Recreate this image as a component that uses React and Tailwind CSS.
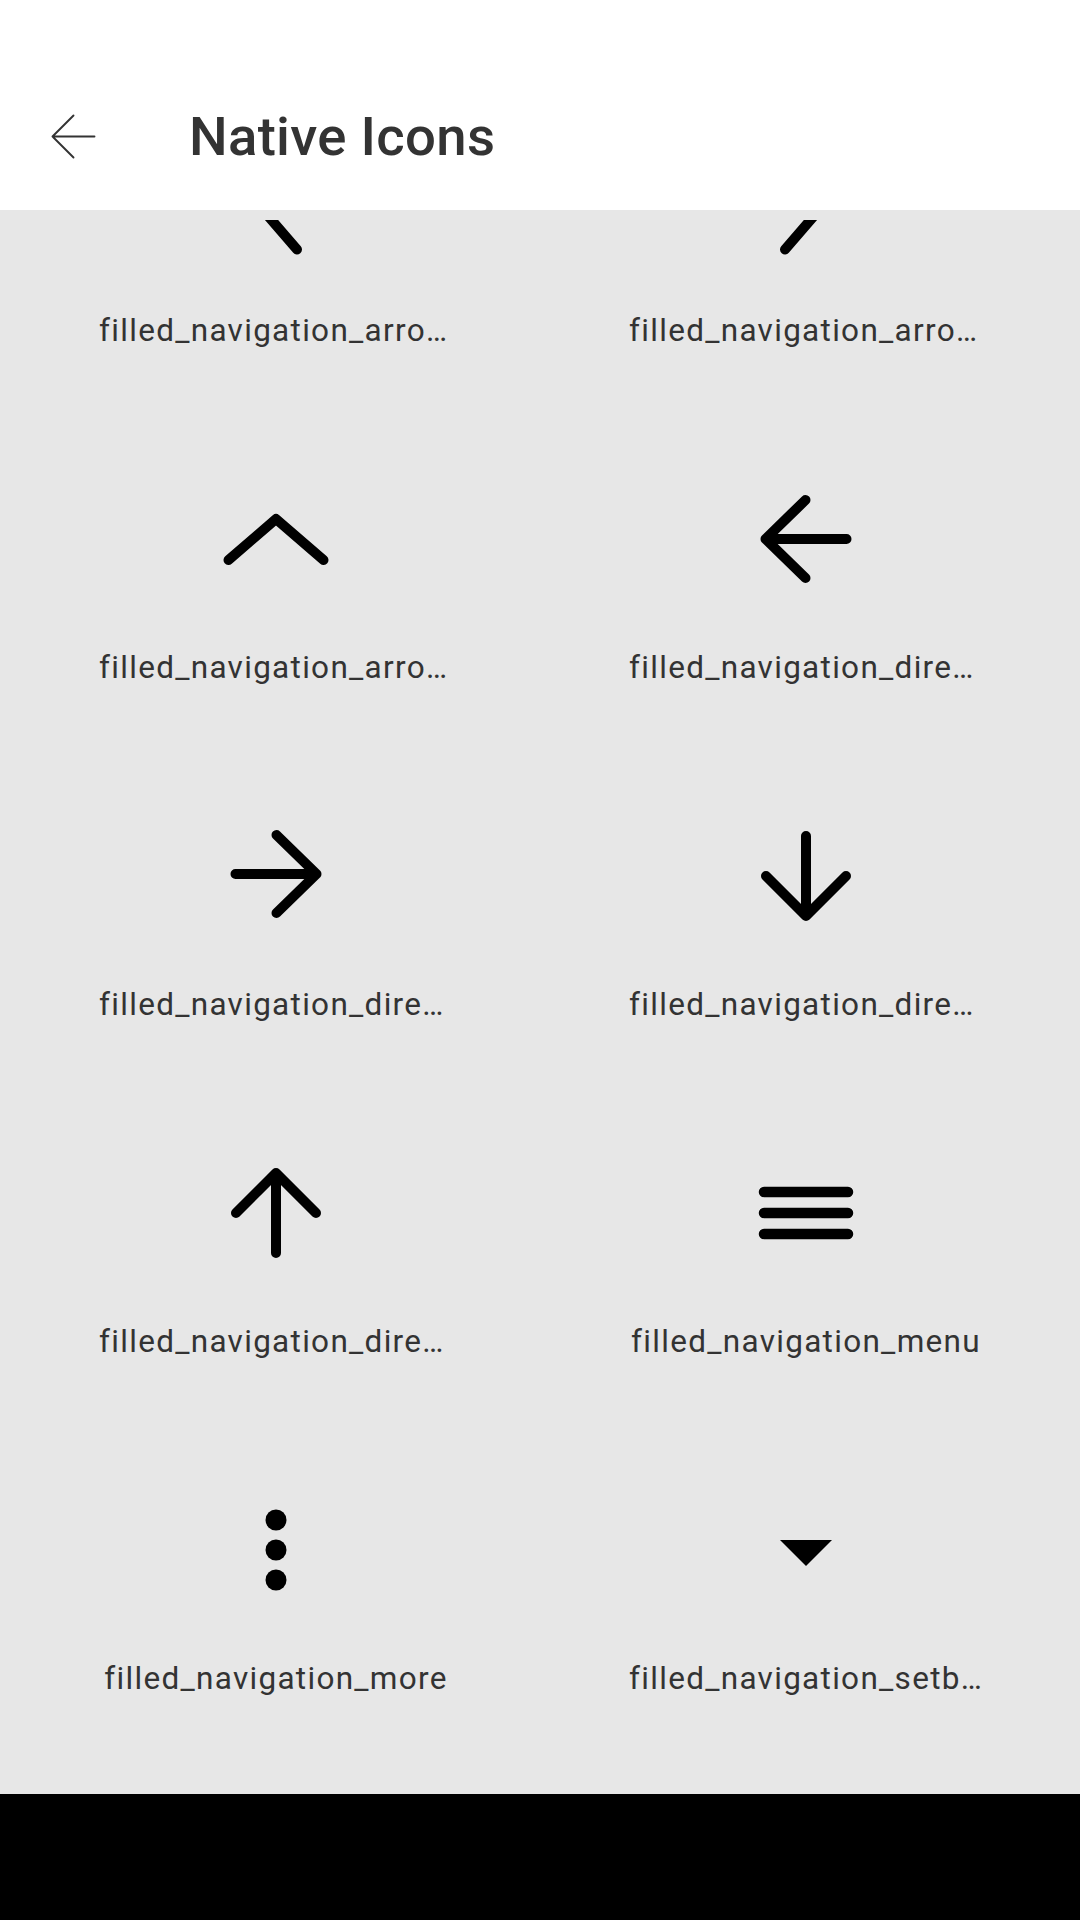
import { useState } from "react";

const FONT = "font-['Roboto','Noto_Sans',sans-serif]";

// icon drawings, all in px around a 120x120 box centred at 60,60
function Icon({ name }) {
  const common = {
    fill: "none",
    stroke: "#000",
    strokeWidth: 10,
    strokeLinecap: "round",
    strokeLinejoin: "round",
  };
  let body = null;
  switch (name) {
    case "arrow_left":
      body = <path d="M81 12.5 L40 60 L81 107.5" {...common} />;
      break;
    case "arrow_right":
      body = <path d="M39 12.5 L80 60 L39 107.5" {...common} />;
      break;
    case "arrow_up":
      body = <path d="M12.5 81 L60 40 L107.5 81" {...common} />;
      break;
    case "dir_left":
      body = <path d="M100.5 60 H19.5 M59.5 21 L19.5 60 L59.5 99" {...common} />;
      break;
    case "dir_right":
      body = <path d="M19.5 58 H100.5 M60.5 19 L100.5 58 L60.5 97" {...common} />;
      break;
    case "dir_down":
      body = <path d="M60 20 V100 M20 60 L60 100 L100 60" {...common} />;
      break;
    case "dir_up":
      body = <path d="M60 100 V20 M20 60 L60 20 L100 60" {...common} />;
      break;
    case "menu":
      body = <path d="M18 39 H102 M18 60 H102 M18 81 H102" {...common} strokeWidth={10.5} />;
      break;
    case "more":
      body = (
        <g fill="#000">
          <circle cx="60" cy="30" r="10.5" />
          <circle cx="60" cy="60" r="10.5" />
          <circle cx="60" cy="90" r="10.5" />
        </g>
      );
      break;
    case "setb":
      body = <path d="M34 50 H86 L60 76 Z" fill="#000" />;
      break;
    default:
      body = null;
  }
  return (
    <svg width="120" height="120" viewBox="0 0 120 120">
      {body}
    </svg>
  );
}

const items = [
  { icon: "arrow_left", label: "filled_navigation_arrow_left" },
  { icon: "arrow_right", label: "filled_navigation_arrow_right" },
  { icon: "arrow_up", label: "filled_navigation_arrow_up" },
  { icon: "dir_left", label: "filled_navigation_direction_left" },
  { icon: "dir_right", label: "filled_navigation_direction_right" },
  { icon: "dir_down", label: "filled_navigation_direction_down" },
  { icon: "dir_up", label: "filled_navigation_direction_up" },
  { icon: "menu", label: "filled_navigation_menu" },
  { icon: "more", label: "filled_navigation_more" },
  { icon: "setb", label: "filled_navigation_setbacklight" },
];

export default function App() {
  const [selected, setSelected] = useState(null);

  return (
    <div className={`w-[1080px] h-[1920px] flex flex-col bg-[#e7e7e7] overflow-hidden ${FONT}`}>
      {/* ───── Top app bar (status bar area + toolbar) ───── */}
      <header className="relative z-10 h-[210px] shrink-0 bg-white pt-[63px]">
        <div className="h-[147px] flex items-center">
          <button className="w-[63px] h-[63px] ml-[42px] flex items-center justify-center">
            <svg width="63" height="63" viewBox="0 0 24 24">
              <path
                d="M20 12 H4 M12 4 L4 12 L12 20"
                fill="none"
                stroke="#333"
                strokeWidth="0.72"
                strokeLinecap="round"
                strokeLinejoin="round"
              />
            </svg>
          </button>
          <h1 className="ml-[84px] text-[54.5px] leading-none font-medium text-[#333] tracking-[0.3px]">
            Native Icons
          </h1>
        </div>
      </header>

      {/* ───── Scrolled icon grid (list has 10px top padding, clipped) ───── */}
      <main className="flex-1 pt-[10px] flex flex-col">
        <div className="flex-1 overflow-hidden">
          <div className="grid grid-cols-2 w-[1080px] pl-[9px] pr-[11px] -mt-[142px]">
            {items.map((it, i) => (
              <button
                key={i}
                onClick={() => setSelected(i)}
                className={`h-[337px] flex flex-col items-center justify-center ${
                  selected === i ? "bg-black/5" : ""
                }`}
              >
                <div className="h-[120px] w-[120px] ml-[4px] flex items-center justify-center">
                  <Icon name={it.icon} />
                </div>
                <div className="mt-[49px] ml-[4px] w-[354px] h-[40px] leading-[40px] text-[31.5px] tracking-[1.3px] text-[#333] text-center whitespace-nowrap overflow-hidden text-ellipsis">
                  {it.label}
                </div>
              </button>
            ))}
          </div>
        </div>
      </main>

      {/* ───── System navigation bar ───── */}
      <footer className="h-[126px] shrink-0 bg-black" />
    </div>
  );
}
